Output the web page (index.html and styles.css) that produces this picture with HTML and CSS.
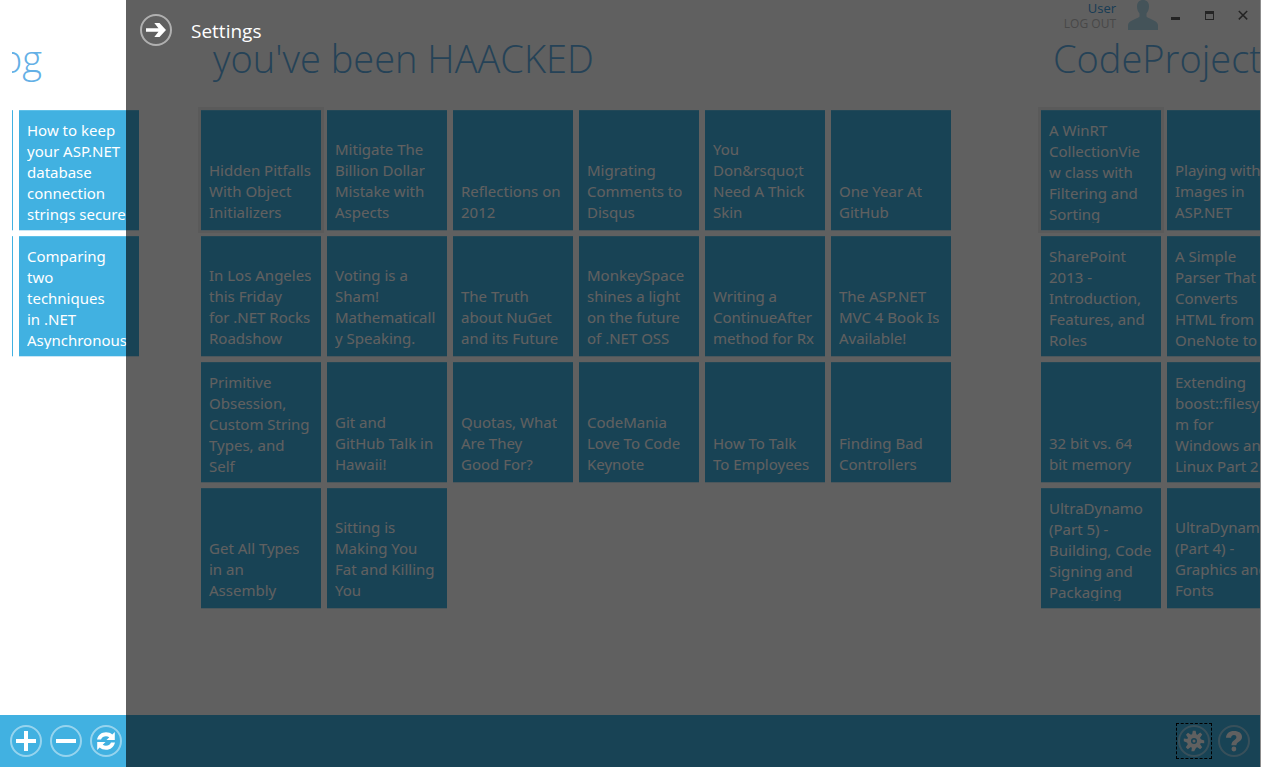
FILE: index.html
```html
<!DOCTYPE html>
<html lang="en">
<head>
<meta charset="utf-8">
<title>Feed reader</title>
<link rel="stylesheet" href="styles.css">
</head>
<body>
<div class="app">
  <header class="titlebar">
    <div class="account">
      <a class="account-name" href="#user">User</a>
      <button class="account-logout" type="button">LOG OUT</button>
    </div>
    <svg class="avatar" viewBox="0 0 30 30" aria-hidden="true"><path d="M15 0c4 0 6 2.500 6 6.500 0 3-1 5-2.500 7v3c1 2 11 3.500 11.500 8.500V30H0v-5c.5-5 10.500-6.500 11.500-8.500v-3C10 11.500 9 9.500 9 6.500 9 2.500 11 0 15 0z"/></svg>
    <div class="window-controls">
      <button type="button" aria-label="Minimize"><svg viewBox="0 0 10 10"><path d="M1 7h9v3H1z"/></svg></button>
      <button type="button" aria-label="Maximize"><svg viewBox="0 0 10 10"><path fill-rule="evenodd" d="M1 1h9v9H1zM2 4v5h7V4z"/></svg></button>
      <button type="button" aria-label="Close"><svg viewBox="0 0 10 10"><path d="M.8 1l8.400 8.400M9.200 1L.8 9.400" fill="none" stroke="#606060" stroke-width="1.500"/></svg></button>
    </div>
  </header>

  <main class="feeds">
    <section class="feed feed-scrolled">
      <h2 class="feed-title">og</h2>
      <div class="tiles">
        <span class="tile"></span>
        <a class="tile" href="#"><span>How to keep<br>your ASP.NET<br>database<br>connection<br>strings secure</span></a>
        <span class="tile"></span>
        <a class="tile" href="#"><span>Comparing<br>two<br>techniques<br>in .NET<br>Asynchronous</span></a>
      </div>
    </section>
    <section class="feed feed-main">
      <h2 class="feed-title">you've been HAACKED</h2>
      <div class="tiles">
        <a class="tile selected" href="#"><span>Hidden Pitfalls<br>With Object<br>Initializers</span></a>
        <a class="tile" href="#"><span>Mitigate The<br>Billion Dollar<br>Mistake with<br>Aspects</span></a>
        <a class="tile" href="#"><span>Reflections on<br>2012</span></a>
        <a class="tile" href="#"><span>Migrating<br>Comments to<br>Disqus</span></a>
        <a class="tile" href="#"><span>You<br>Don&amp;rsquo;t<br>Need A Thick<br>Skin</span></a>
        <a class="tile" href="#"><span>One Year At<br>GitHub</span></a>
        <a class="tile" href="#"><span>In Los Angeles<br>this Friday<br>for .NET Rocks<br>Roadshow</span></a>
        <a class="tile" href="#"><span>Voting is a<br>Sham!<br>Mathematicall<br>y Speaking.</span></a>
        <a class="tile" href="#"><span>The Truth<br>about NuGet<br>and its Future</span></a>
        <a class="tile" href="#"><span>MonkeySpace<br>shines a light<br>on the future<br>of .NET OSS</span></a>
        <a class="tile" href="#"><span>Writing a<br>ContinueAfter<br>method for Rx</span></a>
        <a class="tile" href="#"><span>The ASP.NET<br>MVC 4 Book Is<br>Available!</span></a>
        <a class="tile" href="#"><span>Primitive<br>Obsession,<br>Custom String<br>Types, and<br>Self</span></a>
        <a class="tile" href="#"><span>Git and<br>GitHub Talk in<br>Hawaii!</span></a>
        <a class="tile" href="#"><span>Quotas, What<br>Are They<br>Good For?</span></a>
        <a class="tile" href="#"><span>CodeMania<br>Love To Code<br>Keynote</span></a>
        <a class="tile" href="#"><span>How To Talk<br>To Employees</span></a>
        <a class="tile" href="#"><span>Finding Bad<br>Controllers</span></a>
        <a class="tile" href="#"><span>Get All Types<br>in an<br>Assembly</span></a>
        <a class="tile" href="#"><span>Sitting is<br>Making You<br>Fat and Killing<br>You</span></a>
      </div>
    </section>
    <section class="feed feed-next">
      <h2 class="feed-title">CodeProject</h2>
      <div class="tiles">
        <a class="tile selected" href="#"><span>A WinRT<br>CollectionVie<br>w class with<br>Filtering and<br>Sorting</span></a>
        <a class="tile" href="#"><span>Playing with<br>Images in<br>ASP.NET</span></a>
        <a class="tile" href="#"><span>SharePoint<br>2013 -<br>Introduction,<br>Features, and<br>Roles</span></a>
        <a class="tile" href="#"><span>A Simple<br>Parser That<br>Converts<br>HTML from<br>OneNote to</span></a>
        <a class="tile" href="#"><span>32 bit vs. 64<br>bit memory</span></a>
        <a class="tile" href="#"><span>Extending<br>boost::filesyste<br>m for<br>Windows and<br>Linux Part 2</span></a>
        <a class="tile" href="#"><span>UltraDynamo<br>(Part 5) -<br>Building, Code<br>Signing and<br>Packaging</span></a>
        <a class="tile" href="#"><span>UltraDynamo<br>(Part 4) -<br>Graphics and<br>Fonts</span></a>
      </div>
    </section>
  </main>

  <footer class="appbar">
    <button class="round" type="button" aria-label="Add"><svg viewBox="0 0 32 32"><circle class="ring" cx="16" cy="16" r="15"/><path d="M14 6h4v8h8v4h-8v8h-4v-8H6v-4h8z"/></svg></button>
    <button class="round" type="button" aria-label="Remove"><svg viewBox="0 0 32 32"><circle class="ring" cx="16" cy="16" r="15"/><path d="M6 14h20v4H6z"/></svg></button>
    <button class="round" type="button" aria-label="Refresh"><svg viewBox="0 0 32 32"><circle class="ring" cx="16" cy="16" r="15"/><path d="M7 14.500C8 10 11.500 7.200 16 7.200c2.500 0 4.700.8 6.300 2.200L24.800 7v8h-8.300l2.800-2.700c-1-.7-2-1.100-3.300-1.100-2.300 0-4 1.100-5 3.300zM25 17.500c-1 4.500-4.500 7.300-9 7.300-2.500 0-4.700-.8-6.300-2.200L7.200 25v-8h8.300l-2.800 2.700c1 .7 2 1.100 3.300 1.100 2.300 0 4-1.100 5-3.300z"/></svg></button>
    <span class="spacer"></span>
    <button class="round focused" type="button" aria-label="Settings"><svg viewBox="0 0 32 32"><circle class="ring" cx="16" cy="16" r="15"/><circle cx="16" cy="16" r="5" fill="none" stroke="#fff" stroke-width="4"/><path d="M14 10l.8-4.200h2.800L18.500 10zM14 22l-.6 4.200h2.800L18.500 22zM10 14l-4.200-.6v2.900L10 18zM22 14l4.200 1.500v2.800L22 18zM10.500 13.500L8 9.800l2-2 4 2.700zM18.500 10.500l3.700-3 2 2-2.700 4zM21.500 18.500l2.700 3.700-2 2-4-2.700zM13.500 21.500l-3.700 2.700-2-2 2.700-4z"/><circle cx="16" cy="16" r="1.500"/></svg></button>
    <button class="round" type="button" aria-label="Help"><svg viewBox="0 0 32 32"><circle class="ring" cx="16" cy="16" r="15"/><path d="M8 12.800C8.200 8.500 11.200 6 16 6c4.900 0 8 2.300 8 5.900 0 4.500-5.600 4.600-5.600 8.300h-5c0-4.800 5-5.200 5-8 0-1.400-.9-2.200-2.400-2.200-1.700 0-2.700 1-2.900 2.800z"/><circle cx="15.900" cy="24" r="2.400"/></svg></button>
  </footer>

  <aside class="settings" aria-label="Settings">
    <button class="round" type="button" aria-label="Close settings"><svg viewBox="0 0 32 32"><circle class="ring" cx="16" cy="16" r="15"/><path d="M6 14.300h12.500L14.300 9h5.200l6.500 7-6.500 7h-5.200l4.200-5.300H6z"/></svg></button>
    <h1 class="settings-title">Settings</h1>
  </aside>
</div>
</body>
</html>
```
FILE: styles.css
```css
* { box-sizing: border-box; }

body {
  margin: 0;
  background: #fff;
  font-family: "Noto Sans", "Open Sans", sans-serif;
  font-size: 15px;
}

button {
  border: 0;
  padding: 0;
  background: none;
  font: inherit;
}

a { text-decoration: none; }

svg { display: block; }

.app {
  position: relative;
  display: flex;
  flex-direction: column;
  min-height: 100vh;
  border-right: 1px solid #8c8c8c;
  overflow: hidden;
}

.titlebar {
  display: flex;
  justify-content: flex-end;
  align-items: flex-start;
  height: 32px;
}

.account {
  display: flex;
  flex-direction: column;
  align-items: flex-end;
  margin-right: 12px;
  font-family: "Open Sans", sans-serif;
  font-size: 13px;
  line-height: 16px;
}

.account-name { color: #41a0e1; }

.account-logout {
  color: #c0c0c0;
  font-size: 12px;
}

.avatar {
  width: 30px;
  height: 30px;
  fill: #b4dced;
}

.window-controls {
  display: flex;
  padding-top: 10px;
}

.window-controls button { padding: 0 12px; }

.window-controls svg {
  width: 10px;
  height: 10px;
  fill: #606060;
}

.feeds {
  flex: 1;
  display: flex;
  align-items: flex-start;
  margin-left: 12px;
  overflow: hidden;
}

.feed { flex: none; }

.feed-title {
  height: 78px;
  margin: 0;
  padding-left: 12px;
  color: #64b0e6;
  font-family: "Open Sans", sans-serif;
  font-size: 38px;
  font-weight: 300;
  line-height: 52px;
  white-space: nowrap;
}

.tiles {
  display: grid;
  grid-template-columns: repeat(6, 120px);
  grid-auto-rows: 120px;
  gap: 6px;
}

.feed-scrolled .tiles { grid-template-columns: 1px 120px; }

.feed-scrolled .feed-title {
  margin-left: -12px;
  padding-left: 0;
}

.feed-scrolled .tile:nth-child(odd) { padding: 0; }

.feed-main { margin-left: 62px; }

.feed-next { margin-left: 90px; }

.feed-next .tiles { grid-template-columns: repeat(2, 120px); }

.tile {
  display: flex;
  align-items: flex-end;
  padding: 10px 0 7px 8px;
  background: #41b1e1;
  box-shadow: inset 0 1px #5fc0e8, 0 1px #c9e6f5;
  color: #fff;
  line-height: 21px;
  white-space: nowrap;
}

.tile span {
  max-height: 103px;
  overflow: hidden;
}

.tile.selected { box-shadow: inset 0 1px #5fc0e8, 0 1px #c9e6f5, 0 0 0 3px #f0f0f0; }

.appbar {
  display: flex;
  align-items: center;
  gap: 8px;
  height: 52px;
  padding: 0 10px;
  background: #41b1e1;
}

.spacer { flex: 1; }

.round svg {
  width: 32px;
  height: 32px;
  fill: #fff;
}

.ring {
  fill: none;
  stroke: #fff;
  stroke-opacity: 0.5;
  stroke-width: 2;
}

.appbar .ring { stroke-opacity: 0.45; }

.focused {
  outline: 1px dashed #000;
  outline-offset: 1px;
}

.settings {
  position: absolute;
  top: 0;
  right: 0;
  bottom: 0;
  left: 126px;
  display: flex;
  align-items: flex-start;
  gap: 19px;
  padding: 14px;
  background: rgba(0, 0, 0, 0.625);
}

.settings-title {
  margin: 0;
  color: #fff;
  font-family: "Open Sans", sans-serif;
  font-size: 19px;
  font-weight: 400;
  line-height: 34px;
}
```
